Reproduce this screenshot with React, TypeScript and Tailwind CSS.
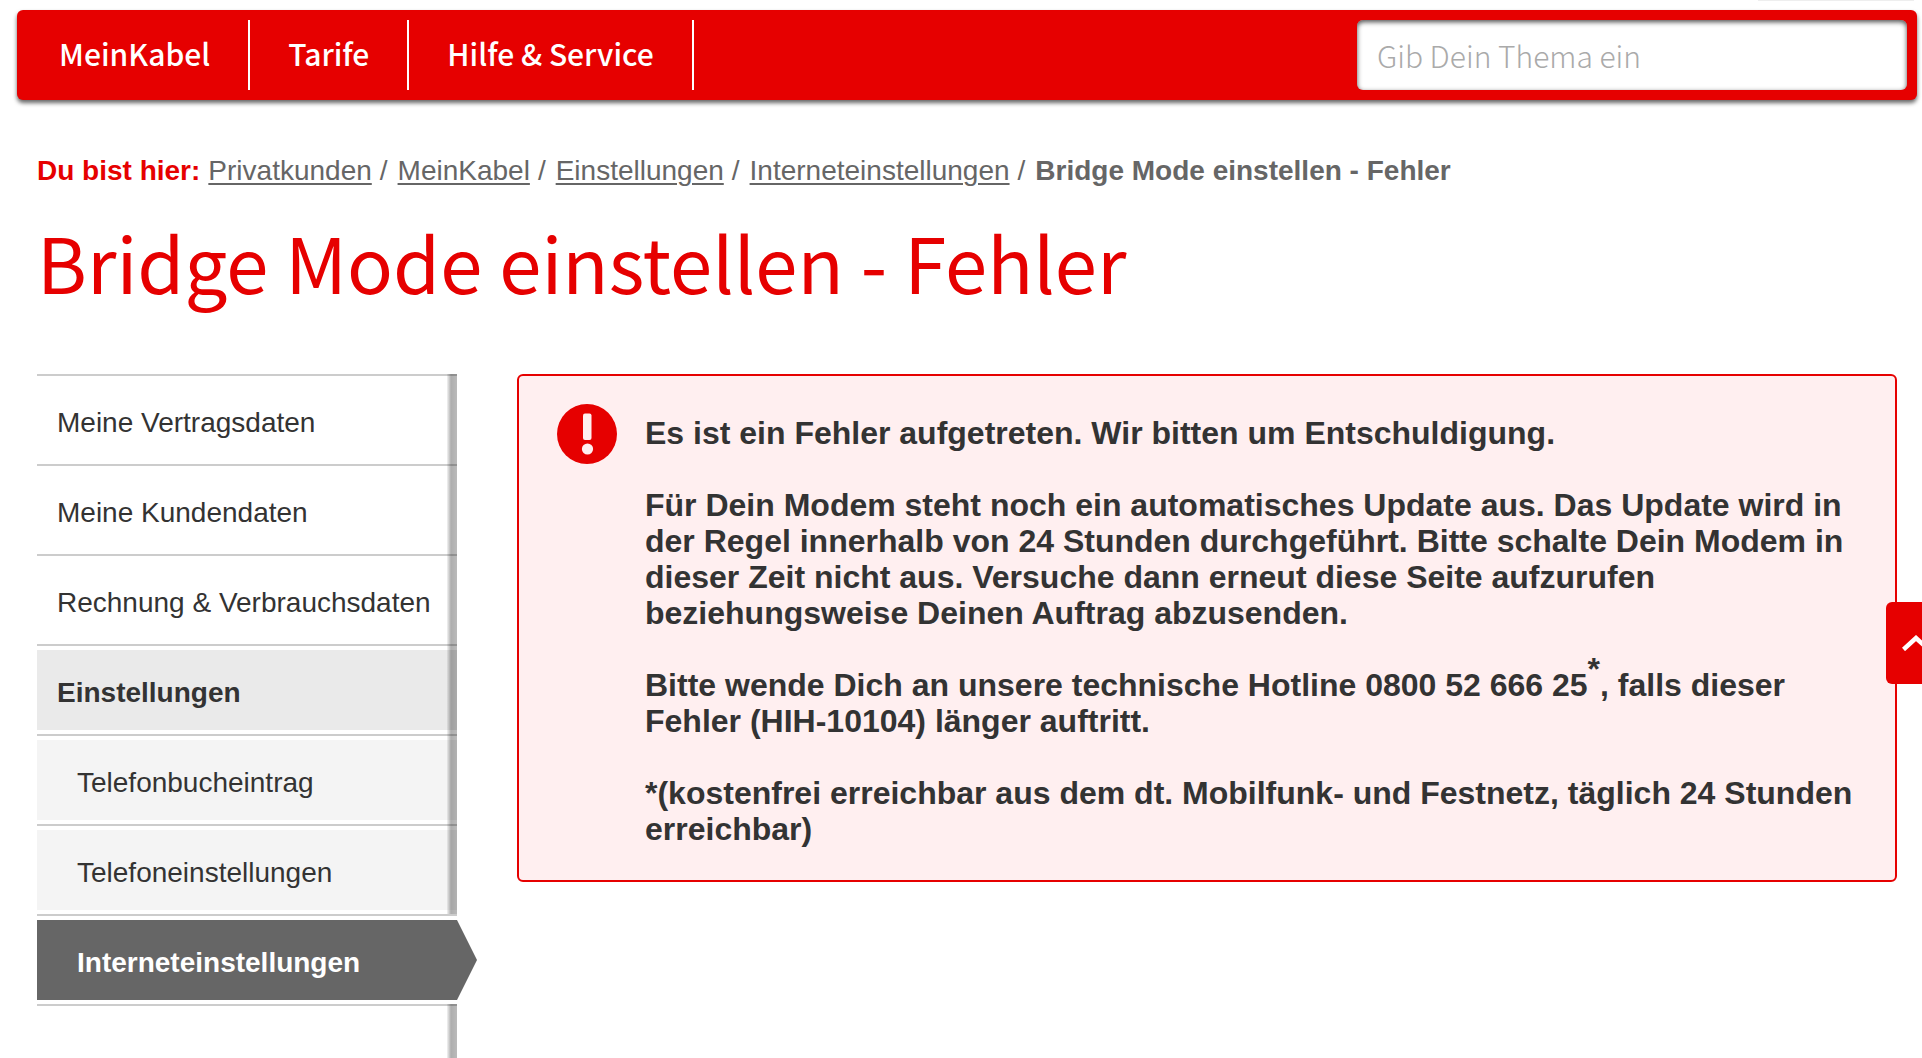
const navItems = ['MeinKabel', 'Tarife', 'Hilfe & Service'];
const crumbs = ['Privatkunden', 'MeinKabel', 'Einstellungen', 'Interneteinstellungen'];

type Level = 'plain' | 'open' | 'sub' | 'active';

const menu: { label: string; level: Level }[] = [
  { label: 'Meine Vertragsdaten', level: 'plain' },
  { label: 'Meine Kundendaten', level: 'plain' },
  { label: 'Rechnung & Verbrauchsdaten', level: 'plain' },
  { label: 'Einstellungen', level: 'open' },
  { label: 'Telefonbucheintrag', level: 'sub' },
  { label: 'Telefoneinstellungen', level: 'sub' },
  { label: 'Interneteinstellungen', level: 'active' },
];

const levelStyles: Record<Level, string> = {
  plain: 'pl-5',
  open: 'pl-5 bg-[#eaeaea] font-bold',
  sub: 'pl-10 bg-[#f4f4f4]',
  active: 'pl-10 bg-[#666666] font-bold text-white',
};

function Header() {
  return (
    <header className="ml-[17px] mr-[5px] flex items-center justify-between rounded-md bg-[#e60000] py-2.5 pr-2.5 font-['Noto_Sans_CJK_SC',sans-serif] shadow-[0_3px_4px_rgba(0,0,0,0.6)]">
      <nav aria-label="Hauptnavigation">
        <ul className="flex">
          {navItems.map((item) => (
            <li key={item} className="border-r-2 border-white first:pl-1">
              <a href="#" className="flex h-[70px] items-center px-[38px] pb-1 text-[30px] leading-none font-medium text-white">
                {item}
              </a>
            </li>
          ))}
        </ul>
      </nav>
      <input
        type="search"
        aria-label="Suche"
        placeholder="Gib Dein Thema ein"
        className="h-[70px] w-[550px] rounded-md bg-white px-5 text-[30px] font-light text-[#333333] shadow-[inset_0_2px_5px_rgba(0,0,0,0.7)] outline-none placeholder:text-[#aaaaaa]"
      />
    </header>
  );
}

function Breadcrumb() {
  return (
    <nav aria-label="Brotkrumen" className="flex flex-wrap gap-x-2 text-[28px] leading-8 text-[#666666]">
      <span className="font-bold text-[#e60000]">Du bist hier:</span>
      {crumbs.map((crumb) => (
        <span key={crumb} className="flex gap-x-2">
          <a href="#" className="underline decoration-2 underline-offset-3">
            {crumb}
          </a>
          <span className="pr-0.5">/</span>
        </span>
      ))}
      <span className="font-bold" aria-current="page">
        Bridge Mode einstellen - Fehler
      </span>
    </nav>
  );
}

function Sidebar() {
  return (
    <aside className="relative w-[420px] shrink-0">
      <ul className="text-[28px] leading-8">
        {menu.map(({ label, level }) => (
          <li
            key={label}
            className={level === 'active' ? 'relative z-10 border-t-2 border-[#cccccc]' : 'border-t-2 border-[#cccccc]'}
          >
            {level === 'active' ? (
              <div className="relative bg-white py-1">
                <a href="#" aria-current="page" className={`flex h-20 items-center pt-1.5 ${levelStyles[level]}`}>
                  {label}
                </a>
                <svg className="absolute top-1 left-full h-20 w-5" viewBox="0 0 20 80" aria-hidden="true">
                  <path d="M0 0 20 40 0 80Z" fill="#666666" />
                </svg>
              </div>
            ) : (
              <div className="py-1">
                <a href="#" className={`flex h-20 items-center pt-1.5 ${levelStyles[level]}`}>
                  {label}
                </a>
              </div>
            )}
          </li>
        ))}
        <li className="border-t-2 border-[#cccccc]" />
      </ul>
      <div className="pointer-events-none absolute inset-y-0 right-0 w-2.5 bg-linear-to-r from-black/5 via-black/32 via-40% to-black/27" />
    </aside>
  );
}

function ErrorMessage() {
  return (
    <section
      role="alert"
      className="flex grow items-start gap-7 self-start rounded-md border-2 border-[#e60000] bg-[#ffeff0] pt-7 pr-9 pb-[33px] pl-[38px]"
    >
      <svg className="size-[60px] shrink-0" viewBox="0 0 60 60" aria-hidden="true">
        <circle cx="30" cy="30" r="30" fill="#e60000" />
        <rect x="26" y="9.5" width="8.5" height="26.5" rx="2" fill="#ffeff0" />
        <circle cx="30.5" cy="45" r="5.6" fill="#ffeff0" />
      </svg>
      <div className="flex flex-col gap-9 pt-[11px] text-[32px] leading-9 font-bold">
        <p>Es ist ein Fehler aufgetreten. Wir bitten um Entschuldigung.</p>
        <p>
          Für Dein Modem steht noch ein automatisches Update aus. Das Update wird in der Regel innerhalb von 24 Stunden
          durchgeführt. Bitte schalte Dein Modem in dieser Zeit nicht aus. Versuche dann erneut diese Seite aufzurufen
          beziehungsweise Deinen Auftrag abzusenden.
        </p>
        <p>
          Bitte wende Dich an unsere technische Hotline 0800 52 666 25
          <sup className="text-[32px]">*</sup>, falls dieser Fehler (HIH-10104) länger auftritt.
        </p>
        <p>*(kostenfrei erreichbar aus dem dt. Mobilfunk- und Festnetz, täglich 24 Stunden erreichbar)</p>
      </div>
    </section>
  );
}

export default function App() {
  return (
    <div className="flex min-h-screen flex-col bg-white font-['Liberation_Sans',Arial,sans-serif] text-[#333333]">
      <div className="flex h-2.5 items-start justify-end pr-2">
        <div className="h-px w-[156px] bg-[#eeeeee]" />
      </div>
      <Header />
      <div className="px-[37px] pt-[55px]">
        <Breadcrumb />
        <h1 className="pt-6 pb-[63px] font-['Noto_Sans_CJK_SC',sans-serif] text-[76px] leading-[100px] font-normal text-[#e60000]">
          Bridge Mode einstellen - Fehler
        </h1>
      </div>
      <main className="flex grow gap-[60px] pr-[25px] pl-[37px]">
        <Sidebar />
        <ErrorMessage />
      </main>
      <button
        type="button"
        aria-label="Nach oben"
        className="fixed top-[602px] right-0 h-[82px] w-9 overflow-hidden rounded-l-md bg-[#e60000] pl-4"
      >
        <svg className="h-4 w-7 max-w-none" viewBox="0 0 28 16" fill="none" aria-hidden="true">
          <path d="M1.5 14.5 14 3 26.5 14.5" stroke="white" strokeWidth="4.5" />
        </svg>
      </button>
    </div>
  );
}
